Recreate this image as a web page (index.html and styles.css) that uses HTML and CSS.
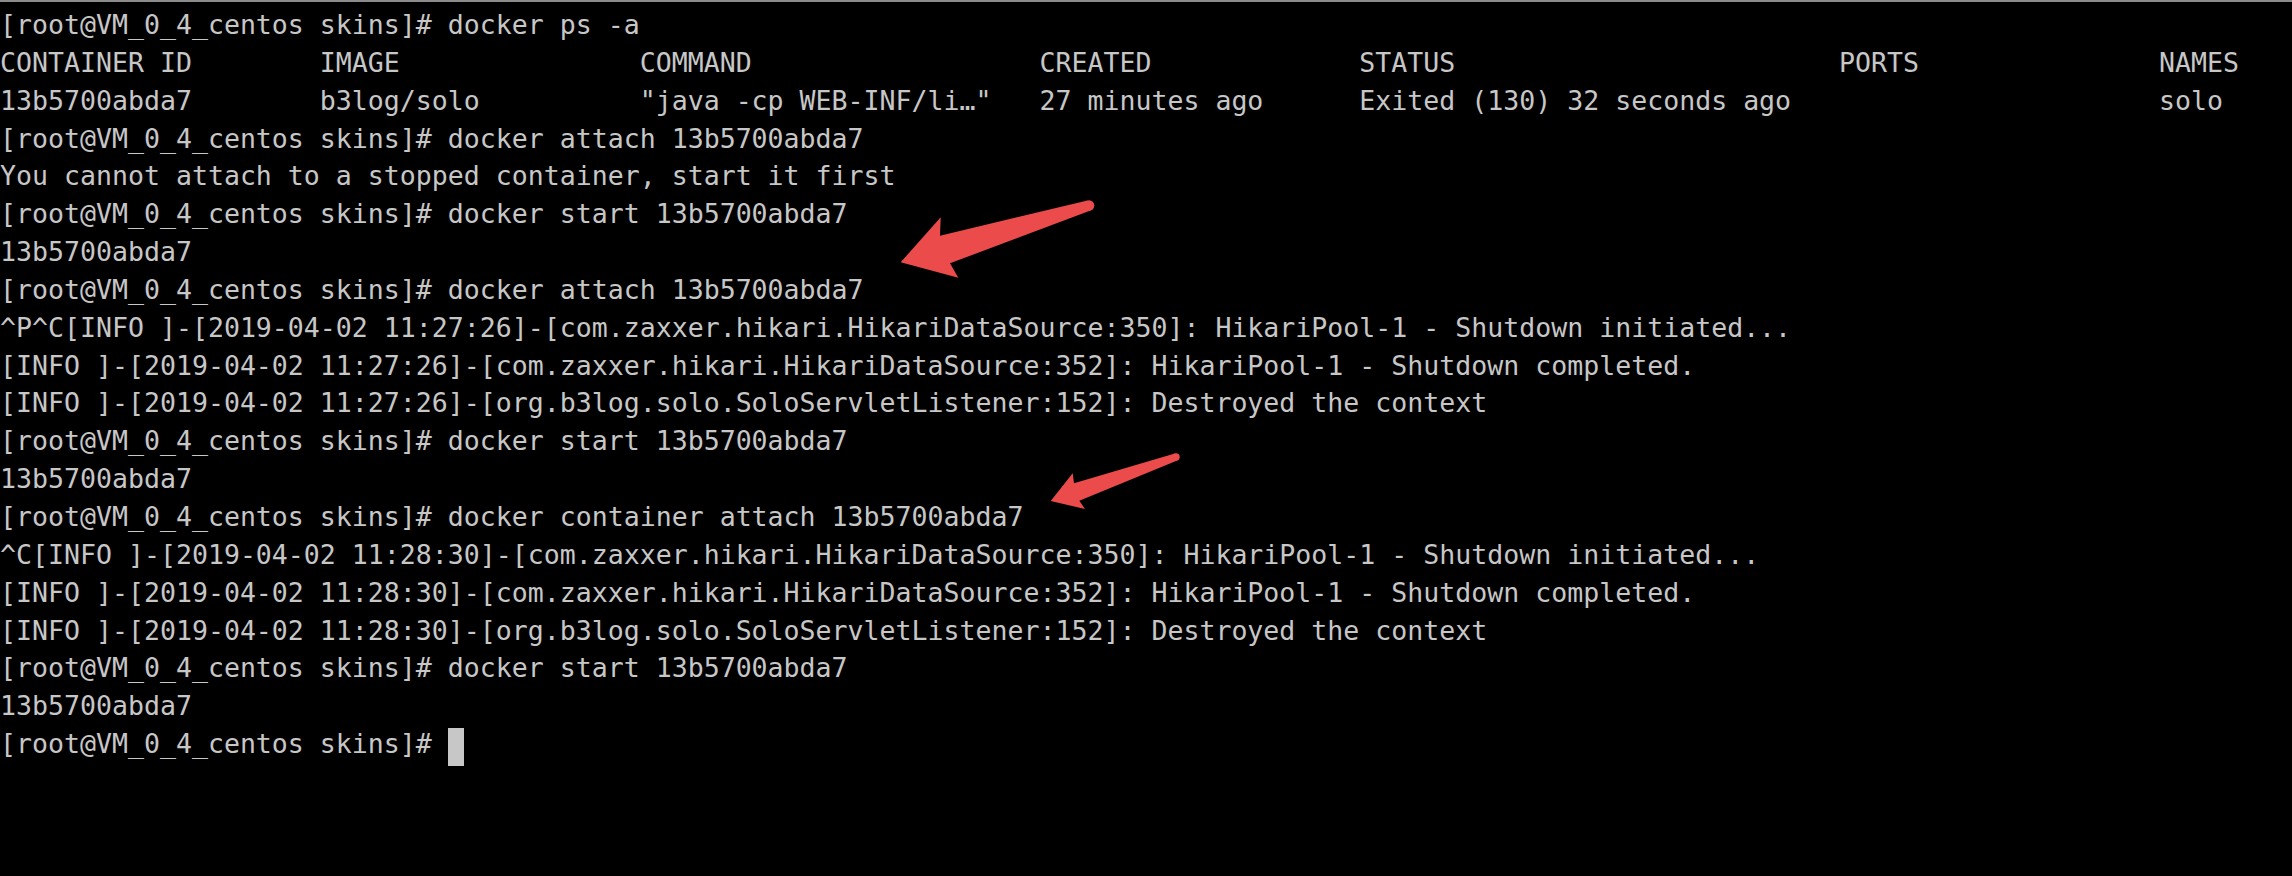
FILE: index.html
```html
<!DOCTYPE html>
<html>
<head>
<meta charset="utf-8">
<link rel="stylesheet" href="styles.css">
</head>
<body>
<div class="term">
<div class="ln">[root@VM_0_4_centos skins]# docker ps -a</div>
<div class="ln">CONTAINER ID        IMAGE               COMMAND                  CREATED             STATUS                        PORTS               NAMES</div>
<div class="ln">13b5700abda7        b3log/solo          "java -cp WEB-INF/li…"   27 minutes ago      Exited (130) 32 seconds ago                       solo</div>
<div class="ln">[root@VM_0_4_centos skins]# docker attach 13b5700abda7</div>
<div class="ln">You cannot attach to a stopped container, start it first</div>
<div class="ln">[root@VM_0_4_centos skins]# docker start 13b5700abda7</div>
<div class="ln">13b5700abda7</div>
<div class="ln">[root@VM_0_4_centos skins]# docker attach 13b5700abda7</div>
<div class="ln">^P^C[INFO ]-[2019-04-02 11:27:26]-[com.zaxxer.hikari.HikariDataSource:350]: HikariPool-1 - Shutdown initiated...</div>
<div class="ln">[INFO ]-[2019-04-02 11:27:26]-[com.zaxxer.hikari.HikariDataSource:352]: HikariPool-1 - Shutdown completed.</div>
<div class="ln">[INFO ]-[2019-04-02 11:27:26]-[org.b3log.solo.SoloServletListener:152]: Destroyed the context</div>
<div class="ln">[root@VM_0_4_centos skins]# docker start 13b5700abda7</div>
<div class="ln">13b5700abda7</div>
<div class="ln">[root@VM_0_4_centos skins]# docker container attach 13b5700abda7</div>
<div class="ln">^C[INFO ]-[2019-04-02 11:28:30]-[com.zaxxer.hikari.HikariDataSource:350]: HikariPool-1 - Shutdown initiated...</div>
<div class="ln">[INFO ]-[2019-04-02 11:28:30]-[com.zaxxer.hikari.HikariDataSource:352]: HikariPool-1 - Shutdown completed.</div>
<div class="ln">[INFO ]-[2019-04-02 11:28:30]-[org.b3log.solo.SoloServletListener:152]: Destroyed the context</div>
<div class="ln">[root@VM_0_4_centos skins]# docker start 13b5700abda7</div>
<div class="ln">13b5700abda7</div>
<div class="ln">[root@VM_0_4_centos skins]# <span class="cursor"></span></div>
</div>
<svg class="marks" width="2292" height="876" viewBox="0 0 2292 876">
  <g fill="#ec4b4b">
    <polygon points="900.7,262.3 940.7,217.3 940,235.7 1087.5,200.5 1090.5,210.5 950,263.3 958.3,277.7"/>
    <circle cx="1089" cy="205.5" r="5.3"/>
    <polygon points="1050.7,501 1072.7,473.3 1074,483.3 1174.8,453.4 1177.2,460.4 1079.3,500.7 1085,509"/>
    <circle cx="1176" cy="457" r="3.7"/>
  </g>
</svg>
</body>
</html>
```
FILE: styles.css
```css
html, body {
  margin: 0;
  padding: 0;
  background: #000;
}
body {
  width: 2292px;
  height: 876px;
  overflow: hidden;
  position: relative;
}
.term {
  border-top: 2px solid #8c8c8c;
  padding: 7px 0 0 0;
  font-family: "DejaVu Sans Mono", monospace;
  font-size: 26.576px;
  color: #c7c7c7;
}
.ln {
  height: 37.85px;
  line-height: 31px;
  white-space: pre;
}
.cursor {
  display: inline-block;
  width: 16px;
  height: 37.7px;
  vertical-align: top;
  background: #c7c7c7;
}
.marks {
  position: absolute;
  top: 0;
  left: 0;
  pointer-events: none;
}
```
